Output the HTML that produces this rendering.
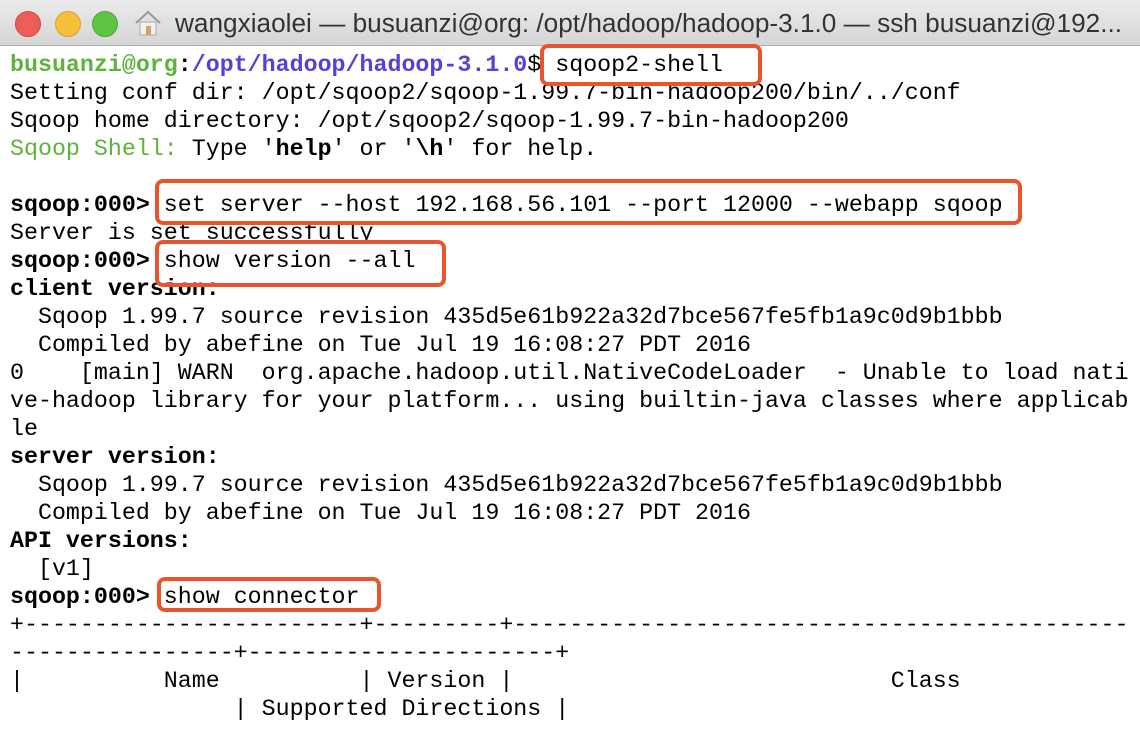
<!DOCTYPE html><html><head><style>
body{margin:0;width:1140px;height:732px;overflow:hidden;background:#fff;position:relative}
.tb{position:absolute;left:0;top:0;width:1140px;height:45px;background:linear-gradient(#ebebeb,#d5d5d5);border-bottom:1px solid #b0b0b0}
.dot{position:absolute;top:11px;width:24px;height:24px;border-radius:50%}
.title{position:absolute;left:175px;top:8px;font:26.2px "Liberation Sans",sans-serif;color:#333;white-space:nowrap}
pre{position:absolute;left:10px;top:51px;margin:0;font:23.3px/28px "Liberation Mono",monospace;color:#000}
.g{color:#5db43c}.bl{color:#5a3fd6}b{font-weight:bold}
.box{position:absolute;border:4px solid #e8552b;border-radius:8px}
</style></head><body>
<div class="tb">
<div class="dot" style="left:15px;background:#ee5e58;border:1px solid #d44"></div>
<div class="dot" style="left:55px;background:#f8bd3b;border:1px solid #dca030"></div>
<div class="dot" style="left:92px;background:#5fc444;border:1px solid #4aa93a"></div>
<svg style="position:absolute;left:134px;top:10px" width="28" height="26" viewBox="0 0 28 26"><path d="M2 13 L14 2 L26 13" fill="none" stroke="#999" stroke-width="2"/><rect x="6" y="12" width="16" height="13" fill="#f1f1f1" stroke="#aaa"/><rect x="12" y="16" width="5" height="9" fill="#d9a066"/></svg>
<div class="title">wangxiaolei — busuanzi@org: /opt/hadoop/hadoop-3.1.0 — ssh busuanzi@192...</div>
</div>
<pre><b class="g">busuanzi@org</b><b>:</b><b class="bl">/opt/hadoop/hadoop-3.1.0</b>$ sqoop2-shell
Setting conf dir: /opt/sqoop2/sqoop-1.99.7-bin-hadoop200/bin/../conf
Sqoop home directory: /opt/sqoop2/sqoop-1.99.7-bin-hadoop200
<span class="g">Sqoop Shell:</span> Type '<b>help</b>' or '<b>\h</b>' for help.

<b>sqoop:000&gt;</b> set server --host 192.168.56.101 --port 12000 --webapp sqoop
Server is set successfully
<b>sqoop:000&gt;</b> show version --all
<b>client version:</b>
  Sqoop 1.99.7 source revision 435d5e61b922a32d7bce567fe5fb1a9c0d9b1bbb
  Compiled by abefine on Tue Jul 19 16:08:27 PDT 2016
0    [main] WARN  org.apache.hadoop.util.NativeCodeLoader  - Unable to load nati
ve-hadoop library for your platform... using builtin-java classes where applicab
le
<b>server version:</b>
  Sqoop 1.99.7 source revision 435d5e61b922a32d7bce567fe5fb1a9c0d9b1bbb
  Compiled by abefine on Tue Jul 19 16:08:27 PDT 2016
<b>API versions:</b>
  [v1]
<b>sqoop:000&gt;</b> show connector
+------------------------+---------+--------------------------------------------
----------------+----------------------+
|          Name          | Version |                           Class
                | Supported Directions |</pre>
<div class="box" style="left:540px;top:44px;width:214px;height:34px"></div>
<div class="box" style="left:155px;top:179px;width:859px;height:38px"></div>
<div class="box" style="left:155px;top:240px;width:283px;height:39px"></div>
<div class="box" style="left:157px;top:577px;width:216px;height:27px"></div>
</body></html>
